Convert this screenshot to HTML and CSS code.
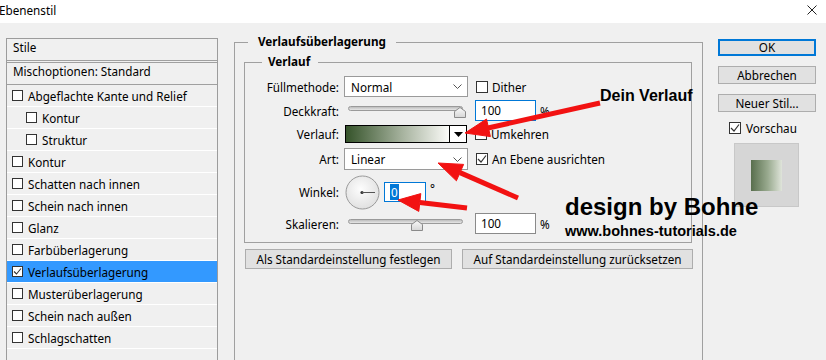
FILE: index.html
```html
<!DOCTYPE html>
<html lang="de">
<head>
<meta charset="utf-8">
<title>Ebenenstil</title>
<link rel="stylesheet" href="styles.css">
</head>
<body>
<div class="titlebar">
  <span class="title">Ebenenstil</span>
  <span class="close"><svg width="10" height="10" viewBox="0 0 10 10"><path d="M0.5 0.5 L9.5 9.5 M9.5 0.5 L0.5 9.5" stroke="#222" stroke-width="1" fill="none"/></svg></span>
</div>
<div class="dialog">
  <div class="styles-list">
    <div class="list-head">Stile</div>
    <div class="list-mix">Mischoptionen: Standard</div>
    <div class="item"><span class="cb sm"></span>Abgeflachte Kante und Relief</div>
    <div class="item sub"><span class="cb sm"></span>Kontur</div>
    <div class="item sub"><span class="cb sm"></span>Struktur</div>
    <div class="item"><span class="cb sm"></span>Kontur</div>
    <div class="item"><span class="cb sm"></span>Schatten nach innen</div>
    <div class="item"><span class="cb sm"></span>Schein nach innen</div>
    <div class="item"><span class="cb sm"></span>Glanz</div>
    <div class="item"><span class="cb sm"></span>Farbüberlagerung</div>
    <div class="item selected"><span class="cb sm"><svg width="9" height="9" viewBox="0 0 9 9"><path d="M1 4.5 L3.5 7 L8 1.5" stroke="#333" stroke-width="1.1" fill="none"/></svg></span>Verlaufsüberlagerung</div>
    <div class="item"><span class="cb sm"></span>Musterüberlagerung</div>
    <div class="item"><span class="cb sm"></span>Schein nach außen</div>
    <div class="item"><span class="cb sm"></span>Schlagschatten</div>
  </div>

  <div class="main">
    <div class="group outer">
      <div class="group-title outer-title">Verlaufsüberlagerung</div>
      <div class="group inner">
        <div class="group-title inner-title">Verlauf</div>

        <div class="row r1">
          <span class="lbl">Füllmethode:</span>
          <div class="select ctl"><span>Normal</span><svg class="chev" width="9" height="5" viewBox="0 0 9 5"><path d="M0.5 0.5 L4.5 4.5 L8.5 0.5" stroke="#555" fill="none"/></svg></div>
          <span class="cb"></span><span class="cbl">Dither</span>
        </div>

        <div class="row r2">
          <span class="lbl">Deckkraft:</span>
          <div class="slider ctl"><div class="track"></div><svg class="thumb thumb-a" width="12" height="11" viewBox="0 0 12 11"><defs><linearGradient id="tg" x1="0" y1="0" x2="0" y2="1"><stop offset="0" stop-color="#fafafa"/><stop offset="1" stop-color="#d6d6d6"/></linearGradient></defs><path d="M0.5 4.5 L6 0.5 L11.5 4.5 L11.5 10.5 L0.5 10.5 Z" fill="url(#tg)" stroke="#8a8a8a"/></svg></div>
          <span class="num focus">100</span><span class="unit">%</span>
        </div>

        <div class="row r3">
          <span class="lbl">Verlauf:</span>
          <div class="gswatch"><div class="gfill"></div><div class="gdrop"><svg width="9" height="5" viewBox="0 0 9 5"><path d="M0 0 L9 0 L4.5 5 Z" fill="#000"/></svg></div></div>
          <span class="cb"></span><span class="cbl">Umkehren</span>
        </div>

        <div class="row r4">
          <span class="lbl">Art:</span>
          <div class="select ctl tall"><span>Linear</span><svg class="chev" width="9" height="5" viewBox="0 0 9 5"><path d="M0.5 0.5 L4.5 4.5 L8.5 0.5" stroke="#555" fill="none"/></svg></div>
          <span class="cb"><svg width="10" height="10" viewBox="0 0 10 10"><path d="M1 5 L4 8 L9 1.5" stroke="#333" stroke-width="1.2" fill="none"/></svg></span><span class="cbl">An Ebene ausrichten</span>
        </div>

        <div class="row r5">
          <span class="lbl">Winkel:</span>
          <svg class="dial" width="35" height="35" viewBox="0 0 35 35"><defs><radialGradient id="dg" cx="0.45" cy="0.4" r="0.7"><stop offset="0" stop-color="#fdfdfd"/><stop offset="1" stop-color="#dcdcdc"/></radialGradient></defs><circle cx="17.5" cy="17.5" r="16.5" fill="url(#dg)" stroke="#9a9a9a"/><circle cx="17" cy="17.5" r="1.6" fill="#333"/><path d="M17 17.5 H30" stroke="#555" stroke-width="1"/></svg>
          <span class="num focus small"><span class="sel">0</span></span><span class="deg">°</span>
        </div>

        <div class="row r6">
          <span class="lbl">Skalieren:</span>
          <div class="slider ctl"><div class="track"></div><svg class="thumb thumb-b" width="12" height="11" viewBox="0 0 12 11"><path d="M0.5 4.5 L6 0.5 L11.5 4.5 L11.5 10.5 L0.5 10.5 Z" fill="url(#tg)" stroke="#8a8a8a"/></svg></div>
          <span class="num">100</span><span class="unit">%</span>
        </div>
      </div>

      <div class="btnrow">
        <div class="btn b1">Als Standardeinstellung festlegen</div>
        <div class="btn b2">Auf Standardeinstellung zurücksetzen</div>
      </div>
    </div>
  </div>

  <div class="side">
    <div class="btn ok">OK</div>
    <div class="btn sbtn">Abbrechen</div>
    <div class="btn sbtn">Neuer Stil...</div>
    <div class="preview-row"><span class="cb"><svg width="10" height="10" viewBox="0 0 10 10"><path d="M1 5 L4 8 L9 1.5" stroke="#333" stroke-width="1.2" fill="none"/></svg></span><span class="cbl">Vorschau</span></div>
    <div class="preview"><div class="swatch"></div></div>
  </div>
</div>

<div class="annot">
  <svg class="arrows" width="826" height="360" viewBox="0 0 826 360">
    <g fill="#f21212" stroke="#f21212">
      <line x1="600" y1="103" x2="488" y2="128" stroke-width="5"/>
      <polygon points="465,133 490.4,136.6 486.5,119" stroke-width="1"/>
      <line x1="518" y1="198" x2="460" y2="172.6" stroke-width="5"/>
      <polygon points="438,163 456.4,180.8 463.6,164.4" stroke-width="1"/>
      <line x1="467" y1="208" x2="419.8" y2="202.5" stroke-width="5"/>
      <polygon points="398,200 418.8,211.4 420.8,193.6" stroke-width="1"/>
    </g>
  </svg>
  <div class="note n1">Dein Verlauf</div>
  <div class="note n2">design by Bohne</div>
  <div class="note n3">www.bohnes-tutorials.de</div>
</div>
</body>
</html>
```
FILE: styles.css
```css
* { box-sizing: border-box; }
html, body { margin: 0; padding: 0; }
body {
  width: 826px;
  height: 360px;
  overflow: hidden;
  background: #f0f0f0;
  font-family: "Noto Sans", "DejaVu Sans", sans-serif;
  font-size: 11.7px;
  color: #000;
  position: relative;
}

.titlebar {
  height: 23px;
  background: #fff;
  display: flex;
  align-items: center;
  justify-content: space-between;
}
.title { margin-left: -1px; line-height: 14px; margin-top: -3px; }
.close { display: flex; margin-right: 9px; margin-top: -3px; }

.dialog {
  display: flex;
  align-items: flex-start;
  padding-left: 6px;
}

/* left styles list */
.styles-list {
  width: 212px;
  height: 340px;
  margin-top: 15px;
  border: 1px solid #9c9c9c;
  flex: none;
}
.list-head {
  height: 22px;
  line-height: 16px;
  padding-left: 6px;
  border-bottom: 1px solid #a0a0a0;
}
.list-mix {
  margin-top: 1px;
  height: 23px;
  line-height: 17px;
  padding-left: 6px;
  border-top: 1px solid #a0a0a0;
  border-bottom: 1px solid #a0a0a0;
}
.item {
  height: 22px;
  display: flex;
  align-items: center;
  padding-left: 5px;
  border-bottom: 1px solid #fff;
  white-space: nowrap;
}
.item.sub { padding-left: 19px; }
.item.selected { background: #3399ff; }

.cb {
  width: 12px;
  height: 12px;
  border: 1px solid #333;
  background: #fff;
  flex: none;
  display: flex;
  align-items: center;
  justify-content: center;
}
.cb.sm { width: 11px; height: 11px; margin-right: 5px; }
.cbl { margin-left: 4px; }

/* main column */
.main {
  margin-left: 16px;
  margin-top: 19px;
  width: 469px;
  flex: none;
}
.group { border: 1px solid #a0a0a0; }
.outer { height: 330px; border-bottom: none; }
.group-title {
  display: block;
  width: fit-content;
  height: 16px;
  line-height: 16px;
  margin-top: -10px;
  background: #f0f0f0;
  font-weight: bold;
}
.outer-title { margin-left: 13px; padding: 0 10px; }
.inner-title { margin-left: 17px; padding: 0 8px 0 6px; }
.inner {
  margin: 13px 10px 0 9px;
  height: 181px;
}

.row { display: flex; align-items: center; }
.r1 { height: 21px; margin-top: 7px; }
.r2 { height: 21px; margin-top: 3px; }
.r3 { height: 18px; margin-top: 4px; }
.r4 { height: 22px; margin-top: 5px; }
.r5 { height: 34px; margin-top: 5px; }
.r6 { height: 21px; margin-top: 4px; }

.lbl {
  width: 94px;
  text-align: right;
  margin-right: 5px;
  flex: none;
}
.ctl { width: 124px; flex: none; margin-right: 7px; }
.row .cb { margin-left: 1px; }

.select {
  height: 21px;
  border: 1px solid #9a9a9a;
  background: #fff;
  display: flex;
  align-items: center;
  justify-content: space-between;
  padding: 0 5px 0 6px;
}
.select.tall { height: 22px; }

.slider { position: relative; height: 21px; padding: 6px 5px 0 4px; }
.track {
  height: 5px;
  border: 1px solid #9a9a9a;
  border-radius: 3px;
  background: linear-gradient(#bdbdbd, #e6e6e6);
}
.thumb { position: absolute; top: 7px; }
.thumb-a { left: 110px; }
.thumb-b { left: 67px; }

.num {
  width: 61px;
  height: 21px;
  border: 1px solid #8a8a8a;
  background: #fff;
  padding-left: 5px;
  line-height: 19px;
  flex: none;
}
.num.focus { border-color: #0078d7; }
.num.small { width: 42px; height: 20px; line-height: 18px; padding-left: 5px; margin-left: 4px; }
.sel { background: #0078d7; color: #fff; padding: 0 1px; }
.unit { margin-left: 4px; }
.deg { margin-left: 4px; align-self: flex-start; margin-top: 5px; }

.dial { margin-left: 1px; flex: none; }

.gswatch {
  width: 122px;
  height: 18px;
  margin-left: 1px;
  margin-right: 7px;
  border: 1px solid #000;
  display: flex;
  flex: none;
}
.gfill { flex: 1; background: linear-gradient(to right, #35532a, #a7b39f 55%, #fbfbf8); }
.gdrop {
  width: 17px;
  border-left: 1px solid #000;
  background: #fff;
  display: flex;
  align-items: center;
  justify-content: center;
}

.btnrow { display: flex; gap: 10px; margin: 6px 0 0 10px; }
.btn {
  height: 20px;
  line-height: 18px;
  background: #e1e1e1;
  border: 1px solid #adadad;
  text-align: center;
  white-space: nowrap;
}
.b1 { width: 207px; }
.b2 { width: 231px; }

/* right column */
.side {
  margin-left: 15px;
  margin-top: 16px;
  width: 98px;
  flex: none;
}
.ok { height: 17px; line-height: 13px; border: 2px solid #0078d7; }
.sbtn { height: 18px; line-height: 16px; margin-top: 10px; }
.preview-row { display: flex; align-items: center; height: 12px; margin-top: 10px; margin-left: 11px; }
.preview-row .cbl { margin-left: 5px; }
.preview {
  width: 65px;
  height: 64px;
  margin: 9px 0 0 16px;
  background: #d6d6d6;
  border: 1px solid #c8c8c8;
  padding: 16px 0 0 16px;
}
.swatch {
  width: 31px;
  height: 31px;
  background: linear-gradient(to right, #586e4d, #9aab90 55%, #dfe4da);
}

/* annotations overlay */
.annot { position: absolute; left: 0; top: 0; width: 826px; height: 360px; pointer-events: none; }
.arrows { position: absolute; left: 0; top: 0; }
.note {
  position: absolute;
  font-family: "Liberation Sans", Arial, sans-serif;
  font-weight: bold;
  color: #000;
  white-space: nowrap;
}
.n1 { left: 600px; top: 87px; font-size: 16px; line-height: 18px; }
.n2 { left: 565px; top: 195px; font-size: 24px; line-height: 24px; }
.n3 { left: 565px; top: 223px; font-size: 14.5px; line-height: 16px; }
```
